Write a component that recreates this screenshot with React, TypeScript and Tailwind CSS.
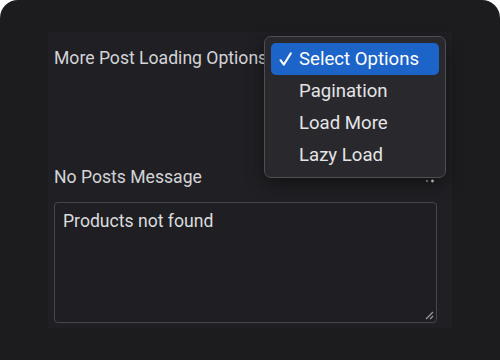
const options = ['Select Options', 'Pagination', 'Load More', 'Lazy Load'];

function CheckMark() {
    return (
        <svg width="13" height="14" viewBox="0 0 13 14" fill="none" className="shrink-0">
            <path d="M1.5 8.2 L4.8 12.6 L11.8 1.4" stroke="white" strokeWidth="2" strokeLinecap="round" strokeLinejoin="round" />
        </svg>
    );
}

function OptionsMenu() {
    return (
        <div className="absolute left-[216px] top-[4px] w-[182px] rounded-[7px] border border-[#4e4e53] bg-[#29292d] p-[6px] shadow-[0_6px_18px_rgba(0,0,0,0.45)]">
            {options.map((option, index) => (
                <div
                    key={option}
                    className={
                        index === 0
                            ? 'flex h-8 items-center rounded-[5px] bg-[#1d64c9] pl-2 text-white'
                            : 'flex h-8 items-center pl-7 text-[#e4e4e7]'
                    }
                >
                    {index === 0 && (
                        <span className="mr-[7px] flex">
                            <CheckMark />
                        </span>
                    )}
                    <span className="text-[18.6px] leading-none">{option}</span>
                </div>
            ))}
        </div>
    );
}

export default function App() {
    return (
        <div className="h-[360px] w-[500px] bg-white" style={{ fontFamily: 'Roboto, "Noto Sans", sans-serif' }}>
            <div className="h-full rounded-t-[18px] bg-[#1c1c1f] px-12 pt-8">
                <div className="relative h-[296px] w-[404px] overflow-visible bg-[#202024] px-1.5 pt-[14px]">
                    <div className="whitespace-nowrap text-[17.6px] leading-6 text-[#d4d4d8]">More Post Loading Options</div>

                    <div className="mt-[95px] text-[17.6px] leading-6 text-[#d4d4d8]">No Posts Message</div>

                    <div className="relative mt-[13px] h-[121px] w-[383px] rounded-[4px] border border-[#46464b] bg-[#1f1f23] px-2 pt-1.5">
                        <span className="text-[17.6px] leading-6 text-[#dcdcdf]">Products not found</span>
                        <svg width="10" height="10" viewBox="0 0 10 10" className="absolute bottom-[2px] right-[2px]">
                            <path d="M2 9 L9 2 M6 9 L9 6" stroke="#9a9aa0" strokeWidth="1.2" />
                        </svg>
                    </div>

                    <svg width="12" height="6" viewBox="0 0 12 6" className="absolute left-[376px] top-[146px]">
                        <circle cx="3" cy="3" r="0.9" fill="#bdbdc2" />
                        <circle cx="8.5" cy="3" r="1.4" fill="#e4e4e7" />
                    </svg>

                    <OptionsMenu />
                </div>
            </div>
        </div>
    );
}
